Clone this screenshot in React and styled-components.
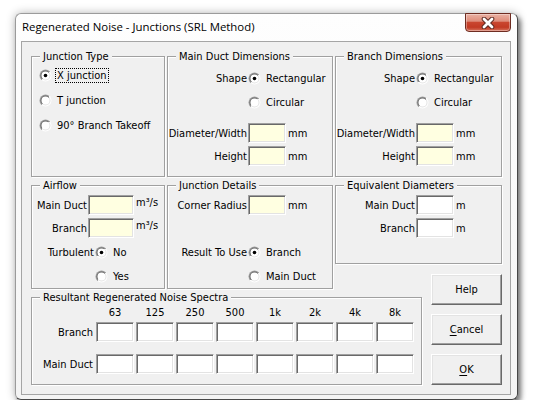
import styled, { createGlobalStyle } from "styled-components";

const GlobalStyle = createGlobalStyle`
  html, body {
    margin: 0;
    background: #ffffff;
  }
  body {
    font-family: "DejaVu Sans Condensed", "DejaVu Sans", sans-serif;
    font-stretch: condensed;
    font-size: 11px;
    color: #000000;
  }
`;

function RadioMark({ checked }) {
  return (
    <svg width="13" height="13" viewBox="0 0 13 13">
      <defs>
        <linearGradient id="radioOuter" x1="0" y1="0" x2="1" y2="1">
          <stop offset="0.5" stopColor="#a0a0a0" />
          <stop offset="0.5" stopColor="#ffffff" />
        </linearGradient>
        <linearGradient id="radioInner" x1="0" y1="0" x2="1" y2="1">
          <stop offset="0.5" stopColor="#696969" />
          <stop offset="0.5" stopColor="#e3e3e3" />
        </linearGradient>
      </defs>
      <circle cx="6.5" cy="6.5" r="6" fill="url(#radioOuter)" />
      <circle cx="6.5" cy="6.5" r="5" fill="url(#radioInner)" />
      <circle cx="6.5" cy="6.5" r="4" fill="#ffffff" />
      {checked && <circle cx="6.5" cy="6.5" r="1.8" fill="#000000" />}
    </svg>
  );
}

function Radio({ checked, focused, children }) {
  return (
    <RadioOption>
      <RadioMark checked={checked} />
      <RadioText $focused={focused}>{children}</RadioText>
    </RadioOption>
  );
}

function CloseGlyph() {
  return (
    <svg width="14" height="12" viewBox="0 0 14 12">
      <path d="M3 2 L11 10 M11 2 L3 10" stroke="#5b2a22" strokeWidth="4.6" strokeLinecap="round" />
      <path d="M3 2 L11 10 M11 2 L3 10" stroke="#ffffff" strokeWidth="2.8" strokeLinecap="round" />
    </svg>
  );
}

function DimensionsGroup({ title, area }) {
  return (
    <Group $area={area}>
      <Legend>{title}</Legend>
      <Row $label={80} $h={24} $mt={3}>
        <Label>Shape</Label>
        <Radio checked>Rectangular</Radio>
      </Row>
      <Row $label={80} $h={24}>
        <span />
        <Radio>Circular</Radio>
      </Row>
      <Row $label={80} $h={20} $mt={9}>
        <Label>Diameter/Width</Label>
        <Control>
          <TextBox $w={38} $bg="#ffffe1" readOnly />
          <Unit>mm</Unit>
        </Control>
      </Row>
      <Row $label={80} $h={20} $mt={3}>
        <Label>Height</Label>
        <Control>
          <TextBox $w={38} $bg="#ffffe1" readOnly />
          <Unit>mm</Unit>
        </Control>
      </Row>
    </Group>
  );
}

const bands = ["63", "125", "250", "500", "1k", "2k", "4k", "8k"];

function App() {
  return (
    <Page>
      <GlobalStyle />
      <Window>
        <TitleBar>
          <Title>Regenerated Noise - Junctions (SRL Method)</Title>
          <CloseButton>
            <CloseGlyph />
          </CloseButton>
        </TitleBar>
        <Client>
          <Group $area="jt">
            <Legend>Junction Type</Legend>
            <RadioList>
              <Radio checked focused>X junction</Radio>
              <Radio>T junction</Radio>
              <Radio>90° Branch Takeoff</Radio>
            </RadioList>
          </Group>

          <DimensionsGroup title="Main Duct Dimensions" area="md" />
          <DimensionsGroup title="Branch Dimensions" area="bd" />

          <Group $area="af">
            <Legend>Airflow</Legend>
            <Row $label={56} $h={20} $mt={3}>
              <Label>Main Duct</Label>
              <Control>
                <TextBox $w={46} $bg="#ffffe1" readOnly />
                <Unit $top>m³/s</Unit>
              </Control>
            </Row>
            <Row $label={56} $h={20} $mt={3}>
              <Label>Branch</Label>
              <Control>
                <TextBox $w={46} $bg="#ffffe1" readOnly />
                <Unit $top>m³/s</Unit>
              </Control>
            </Row>
            <Row $label={63} $h={24} $mt={2}>
              <Label>Turbulent</Label>
              <Radio checked>No</Radio>
            </Row>
            <Row $label={63} $h={24}>
              <span />
              <Radio>Yes</Radio>
            </Row>
          </Group>

          <Group $area="jd">
            <Legend>Junction Details</Legend>
            <Row $label={80} $h={20} $mt={3}>
              <Label>Corner Radius</Label>
              <Control>
                <TextBox $w={38} $bg="#ffffe1" readOnly />
                <Unit>mm</Unit>
              </Control>
            </Row>
            <Row $label={80} $h={24} $mt={25}>
              <Label>Result To Use</Label>
              <Radio checked>Branch</Radio>
            </Row>
            <Row $label={80} $h={24}>
              <span />
              <Radio>Main Duct</Radio>
            </Row>
          </Group>

          <Group $area="ed">
            <Legend>Equivalent Diameters</Legend>
            <Row $label={80} $h={20} $mt={3}>
              <Label>Main Duct</Label>
              <Control>
                <TextBox $w={38} readOnly />
                <Unit>m</Unit>
              </Control>
            </Row>
            <Row $label={80} $h={20} $mt={3}>
              <Label>Branch</Label>
              <Control>
                <TextBox $w={38} readOnly />
                <Unit>m</Unit>
              </Control>
            </Row>
          </Group>

          <Group $area="rs">
            <Legend>Resultant Regenerated Noise Spectra</Legend>
            <Spectra>
              <span />
              {bands.map((b) => (
                <BandHead key={b}>{b}</BandHead>
              ))}
              <Label $spaced>Branch</Label>
              {bands.map((b) => (
                <TextBox key={"b" + b} $w={38} $spaced readOnly />
              ))}
              <Label $spaced $gap>Main Duct</Label>
              {bands.map((b) => (
                <TextBox key={"m" + b} $w={38} $spaced $gap readOnly />
              ))}
            </Spectra>
          </Group>

          <Buttons>
            <Button>Help</Button>
            <Button>
              <u>C</u>ancel
            </Button>
            <Button>
              <u>O</u>K
            </Button>
          </Buttons>
        </Client>
      </Window>
    </Page>
  );
}

export default App;

const Page = styled.div`
  padding: 13px 0 0 15px;
`;
const Window = styled.div`
  box-sizing: border-box;
  width: 503px;
  height: 387px;
  display: flex;
  flex-direction: column;

  border: 1px solid;
  border-color: #9b9b9b #474747 #474747 #9b9b9b;
  border-radius: 6px;

  background: linear-gradient(#fefefe, #f4f4f4);
  box-shadow: 0 0 10px rgba(0, 0, 0, 0.28), 3px 4px 5px rgba(0, 0, 0, 0.45);
`;
const TitleBar = styled.div`
  display: flex;
  justify-content: space-between;
  align-items: flex-start;

  flex: none;
  height: 27px;
`;
const Title = styled.div`
  padding: 5px 0 0 6px;

  font-family: "Open Sans", "Noto Sans", sans-serif;
  font-stretch: normal;
  font-size: 11.4px;
  line-height: 16px;
  color: #000000;
`;
const CloseButton = styled.div`
  box-sizing: border-box;
  display: flex;
  align-items: center;
  justify-content: center;

  width: 46px;
  height: 19px;
  margin: -1px 6px 0 0;

  border: 1px solid #6e2c21;
  border-radius: 0 0 4px 4px;

  background: linear-gradient(
    #eab1a3 0%,
    #de8d7b 42%,
    #c9462f 50%,
    #c23a24 78%,
    #d6735c 100%
  );
  box-shadow: inset 0 0 0 1px rgba(255, 255, 255, 0.35);
`;
const Client = styled.div`
  flex: 1;
  display: grid;
  grid-template-columns: 134px 166px 87px 78px;
  grid-template-rows: 127px 85px 23px 94px;
  grid-template-areas:
    "jt md bd bd"
    "af jd ed ed"
    "af jd . bt"
    "rs rs rs bt";
  gap: 2px;

  margin: 0 6px 4px 5px;
  padding: 8px 0 0 9px;

  border: 1px solid #a5a5a5;

  background: #f0f0f0;
`;
const Group = styled.fieldset`
  grid-area: ${(p) => p.$area};
  box-sizing: border-box;
  min-width: 0;

  margin: 0;
  padding: 0;

  border: 1px solid #a0a0a0;
  box-shadow: 1px 1px 0 #ffffff, inset 1px 1px 0 #ffffff;
`;
const Legend = styled.legend`
  margin-left: 8px;
  padding: 0 3px;

  height: 13px;
  line-height: 13px;

  background: #f0f0f0;
`;
const RadioList = styled.div`
  display: flex;
  flex-direction: column;

  padding-left: 7px;
`;
const RadioOption = styled.div`
  display: flex;
  align-items: center;
  gap: 5px;

  height: 25px;
  white-space: nowrap;

  svg {
    flex: none;
  }
`;
const RadioText = styled.span`
  padding: 0 1px;
  margin-left: -1px;
  line-height: 13px;

  outline: ${(p) => (p.$focused ? "1px dotted #000000" : "none")};
  outline-offset: 0;
`;
const Row = styled.div`
  display: grid;
  grid-template-columns: ${(p) => p.$label}px auto;
  align-items: center;

  height: ${(p) => p.$h}px;
  margin-top: ${(p) => p.$mt || 0}px;

  ${RadioOption} {
    height: auto;
  }
`;
const Label = styled.span`
  padding-right: 1px;
  margin-top: ${(p) => (p.$spaced ? (p.$gap ? 12 : 2) : 0)}px;

  text-align: right;
  white-space: nowrap;
  align-self: center;
`;
const Control = styled.div`
  display: flex;
  align-items: center;
`;
const TextBox = styled.input`
  box-sizing: border-box;
  width: ${(p) => p.$w}px;
  height: 20px;
  margin: ${(p) => (p.$spaced ? (p.$gap ? 12 : 2) : 0)}px 0 0 0;
  padding: 0;

  border: 1px solid;
  border-color: #a0a0a0 #ffffff #ffffff #a0a0a0;
  box-shadow: inset 1px 1px 0 #696969, inset -1px -1px 0 #e3e3e3;
  outline: none;

  background: ${(p) => p.$bg || "#ffffff"};
`;
const Unit = styled.span`
  margin-left: 2px;
  align-self: ${(p) => (p.$top ? "flex-start" : "center")};
  margin-top: ${(p) => (p.$top ? 1 : 0)}px;
  white-space: nowrap;
`;
const Spectra = styled.div`
  display: grid;
  grid-template-columns: 62px repeat(8, 38px);
  column-gap: 2px;
  align-items: center;

  margin-top: 2px;
`;
const BandHead = styled.span`
  height: 14px;
  line-height: 14px;
  text-align: center;
`;
const Buttons = styled.div`
  grid-area: bt;
  align-self: end;
  justify-self: end;

  display: flex;
  flex-direction: column;
  gap: 9px;
`;
const Button = styled.div`
  box-sizing: border-box;
  display: flex;
  align-items: center;
  justify-content: center;

  width: 71px;
  height: 31px;

  border: 1px solid;
  border-color: #ffffff #696969 #696969 #ffffff;
  box-shadow: inset -1px -1px 0 #a0a0a0, inset 1px 1px 0 #e3e3e3;

  background: #f0f0f0;

  u {
    text-decoration-thickness: 1px;
    text-underline-offset: 2px;
  }
`;
